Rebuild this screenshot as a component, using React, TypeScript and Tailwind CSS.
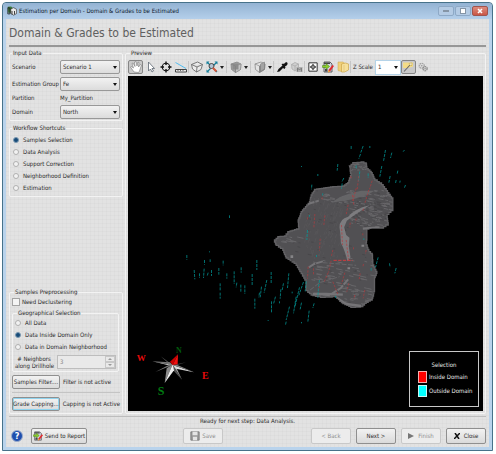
import React, { useState } from 'react';
import clsx from 'clsx';

type Point = [number, number];

const OUTLINE: Point[] = [
  [510, 78], [520, 68], [545, 66], [560, 72], [562, 86], [575, 98], [586, 120], [606, 134], [620, 152],
  [640, 180], [640, 212], [622, 228], [626, 255], [612, 264], [580, 264], [562, 268], [562, 300], [560, 315],
  [568, 335], [578, 345], [580, 375], [592, 400], [585, 420], [585, 455], [578, 480], [560, 490], [550, 500],
  [520, 502], [490, 488], [472, 470], [430, 472], [400, 465], [380, 448], [380, 420], [365, 395], [350, 370],
  [320, 350], [310, 325], [290, 312], [285, 300], [295, 290], [315, 288], [325, 275], [358, 265], [356, 240],
  [365, 215], [390, 185], [395, 165], [405, 148], [460, 140], [490, 138], [505, 128], [515, 100],
];

const random = (seed: number) => () => {
  seed = (seed * 16807) % 2147483647;
  return seed / 2147483647;
};

// The model is made of blocks, so its edge runs in steps
const blockEdge = (points: Point[], size: number) => {
  let d = '';
  points.forEach(([x, y], i) => {
    const [nx, ny] = points[(i + 1) % points.length];
    const steps = Math.max(1, Math.round(Math.hypot(nx - x, ny - y) / size));
    for (let s = 0; s < steps; s++) {
      const px = Math.round(x + ((nx - x) * s) / steps);
      const py = Math.round(y + ((ny - y) * s) / steps);
      d += d ? `H${px}V${py}` : `M${px} ${py}`;
    }
  });
  return d + 'Z';
};

// Short streaks scattered over a box: x, y, width, height, count, length
const streaks = (boxes: number[][], slope: number, seed: number) => {
  const rnd = random(seed);
  let d = '';
  boxes.forEach(([x, y, w, h, count, length]) => {
    for (let i = 0; i < count; i++) {
      const l = length * (0.4 + rnd());
      d += `M${(x + rnd() * w).toFixed(0)} ${(y + rnd() * h).toFixed(0)}l${l.toFixed(0)} ${(l * slope).toFixed(0)}`;
    }
  });
  return d;
};

const EDGE = blockEdge(OUTLINE, 7);
const LIGHT = streaks([[510, 150, 120, 110, 110, 12], [400, 360, 180, 60, 30, 16], [480, 430, 90, 70, 35, 14], [420, 155, 90, 35, 20, 12], [390, 350, 120, 110, 20, 12], [515, 70, 42, 25, 24, 6], [300, 290, 60, 20, 10, 16]], 0.2, 11);
const DARK = streaks([[300, 150, 330, 345, 90, 8], [520, 170, 100, 90, 50, 10]], 0.2, 29);
const GRAIN = streaks([[370, 180, 120, 180, 130, 4]], -3, 5);

// Drillholes outside the domain: x, y, length, lean
const OUTSIDE = [
  [515, 18, 12, 0], [551, 18, 22, -8], [543, 42, 14, -5], [571, 18, 6, 0], [618, 30, 34, -6], [637, 38, 16, -4], [675, 30, 5, -4],
  [475, 72, 20, -2], [607, 78, 32, -6], [655, 92, 10, -2], [632, 108, 20, -4], [650, 120, 10, -2], [678, 135, 8, -3], [662, 122, 6, -1],
  [493, 114, 12, -6], [488, 130, 16, -2], [397, 134, 14, -1], [415, 102, 6, 0], [366, 78, 3, 0], [150, 226, 8, 0], [541, 94, 30, -4],
  [566, 100, 14, 0], [530, 76, 10, 0], [384, 270, 30, -2], [411, 345, 6, 0], [430, 160, 6, -1], [553, 295, 5, 0], [390, 225, 5, 0],
  [22, 345, 14, 0], [44, 390, 28, 2], [60, 400, 14, 0], [75, 360, 14, 0], [74, 386, 28, -2], [92, 358, 8, 0], [96, 390, 18, 0], [86, 398, 10, -3],
  [118, 384, 20, 0], [122, 430, 22, 0], [122, 458, 18, 0], [131, 362, 14, 0], [142, 400, 16, 0], [164, 394, 38, 0], [172, 428, 14, -2],
  [185, 382, 16, 0], [184, 434, 24, 0], [196, 436, 26, 0], [218, 402, 34, 0], [232, 360, 30, 0], [226, 476, 30, 0], [246, 440, 32, -4],
  [262, 420, 38, -8], [275, 396, 36, 0], [276, 484, 34, 0], [288, 470, 22, -6], [304, 448, 28, -2], [312, 430, 20, -4], [328, 400, 44, -4],
  [330, 500, 40, -10], [350, 470, 50, -8], [360, 442, 60, -14], [372, 426, 40, -14], [366, 488, 20, -4], [404, 490, 14, -4], [389, 512, 34, -4],
  [320, 545, 10, -2], [420, 420, 22, -3], [417, 445, 28, -2], [596, 352, 30, -8], [630, 370, 12, 2], [650, 384, 16, -4], [575, 384, 8, 0], [90, 334, 3, 0],
  [338, 455, 5, 0], [300, 484, 6, 0], [266, 540, 3, 0], [366, 546, 4, 0], [380, 424, 30, -3], [240, 458, 14, -2], [468, 468, 6, 1],
];

const INSIDE = [
  [538, 108, 40, -5], [530, 145, 38, -10], [519, 165, 30, 4], [578, 122, 26, -8], [568, 150, 40, -12], [506, 194, 30, -6], [406, 222, 44, -3],
  [436, 226, 30, -3], [422, 296, 36, -2], [384, 232, 6, 0], [428, 172, 6, 0], [552, 206, 8, -2], [530, 235, 12, -2], [512, 248, 14, -1],
  [486, 255, 60, 3], [500, 300, 58, 7], [460, 330, 18, -4], [455, 362, 35, -8], [446, 398, 28, -12], [386, 380, 36, -2], [402, 385, 20, 0],
  [496, 398, 34, -10], [508, 430, 25, -6], [460, 425, 40, 16], [542, 400, 18, -3], [552, 372, 10, -2], [556, 450, 25, -5], [526, 465, 12, -3],
  [420, 438, 12, -2], [560, 330, 12, -2], [522, 322, 6, 0], [550, 280, 6, 0], [513, 108, 10, 4],
];

const holes = (list: number[][]) => list.map(([x, y, l, lean]) => `M${x} ${y}l${lean} ${l}`).join('');

const DomainView = () => (
  <svg className="block h-full w-full" viewBox="0 0 356 335" preserveAspectRatio="xMidYMid slice">
    <defs>
      <clipPath id="body"><path d={EDGE} /></clipPath>
    </defs>
    <g transform="translate(52 64) scale(.33333)" fill="none">
      <path d={EDGE} fill="#515053" stroke="#626164" strokeWidth="4" />
      <g clipPath="url(#body)">
        <path d={GRAIN} stroke="#59585b" strokeWidth="2" />
        <path d={DARK} stroke="#48474a" strokeWidth="3" />
        <path d="M455 188L480 172Q505 160 545 152L585 152L562 166L520 178Z" fill="#6e6d70" opacity=".7" />
        <path d={LIGHT} stroke="#676669" strokeWidth="3" />
        <path d="M570 196Q530 204 506 230Q480 236 480 262Q484 290 484 308Q496 330 504 364L513 352L508 320L510 293L500 285L494 262L502 242L526 224Z" fill="#7d7c7f" />
        <path d="M388 382L404 372L430 364M404 461L450 466L484 444L506 418M364 208L385 192L418 182" stroke="#757477" strokeWidth="6" strokeDasharray="22 3" />
        <path d="M472 474L500 492L545 498M400 462H440L490 464M550 266L600 262" stroke="#757477" strokeWidth="7" />
        <path d="M430 368L530 376M392 450L420 428L480 410" stroke="#676669" strokeWidth="3" strokeDasharray="14 5" />
        <path d="M546 314h8v6h-8zM504 382h8v6h-8zM333 346h8v8h-8z" fill="#858487" />
      </g>
      <path d={holes(OUTSIDE)} stroke="#009c9c" strokeWidth="2.6" strokeDasharray="9 3" opacity=".85" />
      <path d={holes(INSIDE)} stroke="#b4383c" strokeWidth="2.4" strokeDasharray="7 4" opacity=".85" />
      <path d="M462 361H520" stroke="#d03a3e" strokeWidth="3" strokeDasharray="10 4" />
    </g>
  </svg>
);

const Compass = () => (
  <svg className="absolute bottom-1.5 left-0 h-[60px] w-[90px]" viewBox="24 30 270 180" fontFamily="'Liberation Serif', serif" fontWeight="bold">
    <path d="M158 90L122 64L148 88Z" fill="#555" />
    <path d="M158 90L198 82L165 92Z" fill="#444" />
    <path d="M158 90L186 134L168 96Z" fill="#999" />
    <path d="M158 90L186 134L158 104Z" fill="#555" />
    <path d="M158 90L106 111L150 88Z" fill="#777" />
    <path d="M158 90L97 79L142 90Z" fill="#ccc" />
    <path d="M158 90L97 79L150 82Z" fill="#777" />
    <path d="M158 90L222 112L168 101Z" fill="#ddd" />
    <path d="M158 90L222 112L172 90Z" fill="#888" />
    <path d="M158 88L134 144L140 100Z" fill="#888" />
    <path d="M158 88L134 144L162 106Z" fill="#eee" />
    <path d="M158 90L150 80L174 58Z" fill="#c00" />
    <path d="M158 90L174 58L173 88Z" fill="#f01010" />
    <text x="50" y="79" fontSize="27" fill="#e60a0a">W</text>
    <text x="168" y="55" fontSize="24" fill="#005a0c">N</text>
    <text x="246" y="132" fontSize="30" fill="#e60a0a">E</text>
    <text x="113" y="179" fontSize="36" fill="#007c12">S</text>
  </svg>
);

const Icon: React.FC<{ children: React.ReactNode; className?: string }> = ({ children, className }) => (
  <svg viewBox="0 0 24 24" fill="none" className={clsx('shrink-0', className || 'size-3')}>{children}</svg>
);

const ReportIcon = ({ className }: { className?: string }) => (
  <Icon className={className}>
    <path d="M4 2h12l4 4v16H4z" fill="#d4d4de" stroke="#444" strokeWidth="1.6" />
    <path d="M4 3h12v3H4zM6 16h5v5H6z" fill="#444" />
    <path d="M1 9h7V5l7 6-7 6v-4H1z" fill="#8ed02a" stroke="#3e7a10" />
    <path d="M21 8l3 2-8 11-4 2 1-5z" fill="#e22b30" />
    <path d="M12 23l1-5 3 3z" fill="#f3c840" />
  </Icon>
);

const CubeIcon = ({ half }: { half?: boolean }) => (
  <Icon>
    <path d="M2 6L14 2l8 4-1 11-10 6-8-6z" fill={half ? '#e4e4e4' : '#a2a2a2'} stroke="#808080" strokeWidth="1.4" />
    <path d="M11 10L22 6l-1 11-10 6z" fill={half ? '#909090' : '#c4c4c4'} stroke="#808080" />
    {half ? <path d="M13 6l8-4v14l-8 5z" fill="#a4a4a4" stroke="#777" /> : <path d="M5 5h12v12H5z" fill="#8c8c8c" />}
    <path d="M2 6l9 4v13" stroke="#808080" strokeWidth="1.2" />
  </Icon>
);

const GreyCubes = ({ className }: { className?: string }) => (
  <Icon className={className}>
    <path d="M1 7l7-4 7 3v9l-7 5-6-4z" fill="#cfcfcf" stroke="#aaa" strokeWidth="1.5" />
    <path d="M1 7l7 3 7-4M8 10v9" stroke="#aaa" strokeWidth="1.5" />
    <path d="M11 12h12v10H11z" fill="#aeaeae" />
    <path d="M13 21v-7l4 4 4-4v7" stroke="#7d7d7d" strokeWidth="2" />
  </Icon>
);

const Gears = () => (
  <Icon className="size-2.5">
    <circle cx="9" cy="9" r="6" fill="#ddd" stroke="#a2a2a2" strokeWidth="3" strokeDasharray="4 1.5" />
    <circle cx="9" cy="9" r="2" fill="#999" />
    <circle cx="17" cy="16" r="5" fill="#d4d4d4" stroke="#8e8e8e" strokeWidth="3" strokeDasharray="3.5 1.5" />
    <circle cx="17" cy="16" r="1.6" fill="#888" />
  </Icon>
);

const Tool: React.FC<{ label: string; pressed?: boolean; children: React.ReactNode }> = ({ label, pressed, children }) => (
  <button
    aria-label={label}
    className={clsx('flex h-3.5 w-[15px] shrink-0 items-center justify-center rounded-xs', pressed && 'border border-[#868686] bg-[#c9c9c9]')}
  >
    {children}
  </button>
);

const Caret = ({ label }: { label: string }) => (
  <button aria-label={label} className="flex h-3.5 w-1.5 shrink-0 items-center justify-center">
    <svg viewBox="0 0 4 3" className="h-[3px] w-1"><path d="M0 0h4L2 3z" fill="#222" /></svg>
  </button>
);

const Divider = ({ wide }: { wide?: boolean }) => (
  <div className={clsx('h-3 w-px shrink-0 bg-[#c6c6c6]', wide && 'mx-px')} />
);

const Toolbar = () => (
  <div className="flex h-4 items-center">
    <Tool label="Pan" pressed>
      <Icon>
        <path d="M8 22L1 12l2-1 4 3L4 5l2-1 4 7L9 2l3-1 2 9 2-8 2 1-1 9 4-5 2 1-4 12-2 3z" fill="#fff" stroke="#777" strokeWidth="1.2" />
      </Icon>
    </Tool>
    <Tool label="Select">
      <Icon><path d="M7 2v18l4-4 3 6 3-2-3-5h5z" fill="#fff" stroke="#5c6570" strokeWidth="1.6" /></Icon>
    </Tool>
    <Tool label="Center">
      <Icon>
        <circle cx="12" cy="12" r="7.5" stroke="#111" strokeWidth="2.2" />
        <path d="M12 1v7M12 16v7M1 12h7M16 12h7" stroke="#111" strokeWidth="2.8" />
      </Icon>
    </Tool>
    <Tool label="Measure">
      <Icon>
        <path d="M1 3l21 12" stroke="#53bdf0" strokeWidth="2" />
        <path d="M1 17h22v5H1z" fill="#eee" stroke="#333" strokeWidth="1.8" />
        <path d="M6 17v3M11 17v3M16 17v3" stroke="#333" strokeWidth="1.4" />
      </Icon>
    </Tool>
    <Divider />
    <Tool label="Box view">
      <Icon>
        <path d="M1 7l12-5 10 5-3 10-9 5-8-6zM1 7l11 5 11-5M12 12l-1 10" fill="#ececec" stroke="#666" strokeWidth="1.7" />
      </Icon>
    </Tool>
    <Tool label="Zoom to extents">
      <Icon>
        <path d="M3 3l6 6M21 3l-6 6M3 21l6-6M22 22l-7-7" stroke="#137f9b" strokeWidth="2.4" />
        <path d="M1 1h6L1 7zM23 1h-6l6 6zM1 23h6l-6-6z" fill="#137f9b" />
        <circle cx="11" cy="10" r="5" fill="#b4c4d4" stroke="#444" strokeWidth="2" />
        <path d="M14 14l7 7" stroke="#d6583c" strokeWidth="4" />
      </Icon>
    </Tool>
    <Caret label="Zoom options" />
    <Divider wide />
    <Tool label="Solid view"><CubeIcon /></Tool>
    <Caret label="Solid view options" />
    <Divider wide />
    <Tool label="Slice view"><CubeIcon half /></Tool>
    <Caret label="Slice view options" />
    <Divider />
    <Tool label="Probe">
      <Icon>
        <path d="M2 22l3-6 8-7-2-2 3-2 2 1c3-5 8-4 7 0 0 2-3 4-5 5l1 2-2 3-3-2-7 7z" fill="#111" />
      </Icon>
    </Tool>
    <Tool label="Block model"><GreyCubes /></Tool>
    <Divider />
    <Tool label="Fit to view">
      <Icon className="size-2.5">
        <path d="M2 2h20v20H2z" fill="#fff" stroke="#333" strokeWidth="2.4" />
        <path d="M12 4l4 5h-8zM12 20l4-5h-8zM4 12l5-4v8zM20 12l-5-4v8z" fill="#333" />
        <path d="M12 8v8M8 12h8" stroke="#333" strokeWidth="1.6" />
      </Icon>
    </Tool>
    <Tool label="Send view to report"><ReportIcon /></Tool>
    <Tool label="Copy view">
      <Icon>
        <path d="M2 2h10l3 2v14l-6 3-7-2z" fill="#f0d07a" stroke="#c8a548" />
        <path d="M9 6l8-2 6 2v12l-8 4H9z" fill="#f6e09a" stroke="#cba64a" strokeWidth="1.4" />
        <path d="M14 8v14" stroke="#d4b560" />
      </Icon>
    </Tool>
    <Divider />
    <label htmlFor="z-scale" className="px-0.5">Z Scale</label>
    <div className="relative w-[26px] shrink-0">
      <select id="z-scale" className="block h-[15px] w-full appearance-none border border-[#b5d3e8] bg-white pl-0.5">
        <option>1</option>
      </select>
      <svg viewBox="0 0 4 3" className="pointer-events-none absolute top-1.5 right-[3px] h-[3px] w-1"><path d="M0 0h4L2 3z" fill="#111" /></svg>
    </div>
    <Tool label="Highlight" pressed>
      <Icon>
        <path d="M2 3h20v8l-9 3H2z" fill="#f3dc86" />
        <path d="M4 21L16 8" stroke="#666" strokeWidth="2.2" />
        <path d="M14 5l6-1-1 6z" fill="#fff" stroke="#b8962e" />
      </Icon>
    </Tool>
    <Tool label="Link views"><Gears /></Tool>
  </div>
);

const Group: React.FC<{ title: string; className?: string; children: React.ReactNode }> = ({ title, className, children }) => (
  <fieldset className={clsx('min-w-0 rounded-xs border border-[#f3f3f3]', className)}>
    <legend className="ml-0.5 px-px leading-2">{title}</legend>
    {children}
  </fieldset>
);

const Select: React.FC<{ id: string; label: string; value: string }> = ({ id, label, value }) => (
  <>
    <label htmlFor={id}>{label}</label>
    <div className="relative">
      <select id={id} className="block h-3.5 w-full appearance-none rounded-xs border border-[#989898] bg-linear-to-b from-[#f2f2f2] to-[#dcdcdc] pl-0.5">
        <option>{value}</option>
      </select>
      <svg viewBox="0 0 4 3" className="pointer-events-none absolute top-1.5 right-[3px] h-[3px] w-1"><path d="M0 0h4L2 3z" fill="#111" /></svg>
    </div>
  </>
);

const Radio: React.FC<{ name: string; label: string; checked: boolean; onChange: () => void }> = ({ name, label, checked, onChange }) => (
  <label className="flex h-3 items-center gap-1">
    <input
      type="radio"
      name={name}
      checked={checked}
      onChange={onChange}
      className="size-1.5 appearance-none rounded-full border border-[#b0b0b0] bg-[#f2f2f2] checked:border-[#7d9ab2] checked:bg-[#174b78]"
    />
    {label}
  </label>
);

const Button: React.FC<{ disabled?: boolean; className?: string; children: React.ReactNode }> = ({ disabled, className, children }) => (
  <button
    disabled={disabled}
    className={clsx(
      'flex items-center justify-center rounded-xs border whitespace-nowrap',
      disabled ? 'border-[#c8c8c8] bg-[#ececec] text-[#8c8c8c]' : 'border-[#8f8f8f] bg-linear-to-b from-[#f2f2f2] to-[#dadada]',
      className
    )}
  >
    {children}
  </button>
);

const SHORTCUTS = ['Samples Selection', 'Data Analysis', 'Support Correction', 'Neighborhood Definition', 'Estimation'];
const SELECTIONS = ['All Data', 'Data Inside Domain Only', 'Data in Domain Neighborhood'];

const App: React.FC = () => {
  const [shortcut, setShortcut] = useState(SHORTCUTS[0]);
  const [selection, setSelection] = useState(SELECTIONS[1]);

  return (
    <div className="flex min-h-screen flex-col bg-white pt-0.5 pr-[3px] pb-[3px] pl-0.5 font-['DejaVu_Sans_Condensed','DejaVu_Sans',sans-serif] text-[6px] leading-2 text-[#2a2a2a]">
      <div className="flex flex-1 flex-col rounded-t-sm border border-[#47728a] bg-[#b9d3ec] px-[3px] pb-[3px]">
        {/* Title bar */}
        <div className="-mx-[3px] flex h-4 items-center gap-0.5 rounded-t-sm bg-linear-to-b from-[#94b3d3] to-[#b4cfea] pr-1 pl-1">
          <Icon className="size-2.5">
            <path d="M2 2l8-1 3 3v12H3z" fill="#3b7b37" />
            <path d="M9 7l7-3 7 4v10l-7 4-7-4z" fill="#e9e9e9" stroke="#333" strokeWidth="1.6" />
            <path d="M2 4v15h5V5zM12 12v8M18 12v8" stroke="#222" strokeWidth="2" />
          </Icon>
          <span className="flex-1 text-[#10202e]">Estimation per Domain - Domain &amp; Grades to be Estimated</span>
          <div className="flex gap-px">
            <button aria-label="Minimize" className="flex h-2.5 w-4 items-center justify-center rounded-xs border border-[#8ea9c6] bg-[#b4cbe4]">
              <span className="h-0.5 w-1.5 border border-[#8595a6] bg-white" />
            </button>
            <button aria-label="Maximize" className="flex h-2.5 w-4 items-center justify-center rounded-xs border border-[#8ea9c6] bg-[#b4cbe4]">
              <span className="h-1.5 w-1.5 border border-[#8595a6] bg-white" />
            </button>
            <button aria-label="Close window" className="flex h-2.5 w-4 items-center justify-center rounded-xs border border-[#a0544e] bg-linear-to-b from-[#dc8b7e] to-[#c95646]">
              <svg viewBox="0 0 6 6" className="size-1.5"><path d="M1 1l4 4M5 1L1 5" stroke="#fff" strokeWidth="1.6" /></svg>
            </button>
          </div>
        </div>

        <div className="flex flex-1 flex-col bg-[#e2e2e2] bg-[linear-gradient(#00000005_1px,transparent_1px),linear-gradient(90deg,#00000005_1px,transparent_1px)] bg-size-[4px_4px] px-[3px] pb-[3px]">
          <h1 className="border-b-2 border-[#979797] pt-1.5 pb-1 text-[12px] leading-4 text-[#606060]">Domain &amp; Grades to be Estimated</h1>

          <div className="grid flex-1 grid-cols-[114px_minmax(0,1fr)] gap-0.5 pt-0.5">
            <div className="flex flex-col gap-[3px]">
              <Group title="Input Data" className="pb-px">
                <div className="grid grid-cols-[48px_minmax(0,1fr)] items-center gap-y-[3px] pt-[3px] pr-0.5 pl-0.5 whitespace-nowrap">
                  <Select id="scenario" label="Scenario" value="Scenario 1" />
                  <Select id="group" label="Estimation Group" value="Fe" />
                  <span>Partition</span>
                  <span>My_Partition</span>
                  <Select id="domain" label="Domain" value="North" />
                </div>
              </Group>

              <Group title="Workflow Shortcuts" className="pb-0.5">
                <div className="pt-0.5 pl-[3px]">
                  {SHORTCUTS.map((s) => (
                    <Radio key={s} name="shortcut" label={s} checked={s === shortcut} onChange={() => setShortcut(s)} />
                  ))}
                </div>
              </Group>

              <Group title="Samples Preprocessing" className="mt-auto px-0.5 pb-0.5">
                <label className="flex h-3 items-center gap-0.5">
                  <input type="checkbox" className="size-2 appearance-none border border-[#a4a4a4] bg-[#f4f4f4] checked:bg-[#174b78]" />
                  Need Declustering
                </label>
                <Group title="Geographical Selection" className="mt-px mr-px pb-0.5 pl-0.5">
                  {SELECTIONS.map((s) => (
                    <Radio key={s} name="selection" label={s} checked={s === selection} onChange={() => setSelection(s)} />
                  ))}
                  <div className="mt-0.5 flex items-center gap-1 pr-0.5">
                    <label htmlFor="neighbors" className="w-[38px] text-center leading-[7px] whitespace-nowrap"># Neighbors<br />along Drillhole</label>
                    <div className="flex h-3.5 min-w-0 flex-1 border border-[#bdbdbd] bg-[#e9e9e9]">
                      <input id="neighbors" type="number" disabled defaultValue={3} className="w-full min-w-0 flex-1 appearance-none pl-0.5 text-[#888] [&::-webkit-inner-spin-button]:appearance-none" />
                      <div className="flex w-2.5 flex-col">
                        <button disabled aria-label="More neighbors" className="flex flex-1 items-center justify-center border border-[#c8c8c8]">
                          <svg viewBox="0 0 4 2" className="h-0.5 w-1"><path d="M0 2h4L2 0z" fill="#999" /></svg>
                        </button>
                        <button disabled aria-label="Fewer neighbors" className="flex flex-1 items-center justify-center border border-[#c8c8c8]">
                          <svg viewBox="0 0 4 2" className="h-0.5 w-1"><path d="M0 0h4L2 2z" fill="#999" /></svg>
                        </button>
                      </div>
                    </div>
                  </div>
                </Group>
                <div className="mt-[3px] flex items-center gap-[3px] border-b border-[#c4c4c4] pb-[3px] whitespace-nowrap">
                  <Button className="h-3.5 w-12">Samples Filter....</Button>
                  <span>Filter is not active</span>
                </div>
                <div className="mt-1 flex items-center gap-[3px] whitespace-nowrap">
                  <Button className="h-3.5 w-12 border-[#3f9fc6] ring-1 ring-[#8fd3ee] ring-inset">Grade Capping...</Button>
                  <span>Capping is not Active</span>
                </div>
              </Group>
            </div>

            <Group title="Preview" className="flex flex-col px-0.5 pt-0.5 pb-0.5">
              <Toolbar />
              <div className="relative mt-px min-h-0 flex-1 bg-black">
                <div className="absolute inset-0"><DomainView /></div>
                <Compass />
                <div className="absolute right-1 bottom-1 flex h-14 w-[70px] flex-col justify-center border border-[#c8c8c8] pl-2 text-[#e8e8e8]">
                  <div className="mb-0.5 pr-2 text-center">Selection</div>
                  <div className="flex items-center gap-0.5 whitespace-nowrap">
                    <span className="h-3 w-[9px] border border-[#f3b0b0] bg-[#ff0000]" />
                    Inside Domain
                  </div>
                  <div className="mt-0.5 flex items-center gap-0.5 whitespace-nowrap">
                    <span className="h-3 w-[9px] border border-[#c8f4f4] bg-[#00ffff]" />
                    Outside Domain
                  </div>
                </div>
              </div>
            </Group>
          </div>

          {/* Wizard footer */}
          <div className="mt-0.5 border-t border-[#bdbdbd] text-center">Ready for next step: Data Analysis.</div>
          <div className="mt-[3px] grid grid-cols-[1fr_auto_1fr] items-center">
            <div className="flex items-center gap-2 pl-0.5">
              <button aria-label="Help" className="flex size-3 items-center justify-center rounded-full border border-[#9aaccc] bg-[#1f4fae] text-[9px] font-bold text-white">?</button>
              <Button className="h-4 w-14 gap-0.5"><ReportIcon className="size-2.5" />Send to Report</Button>
            </div>
            <Button disabled className="mr-22 h-4 w-10 gap-0.5">
              <Icon className="size-2.5">
                <path d="M2 2h20v20H2z" fill="#9a9a9a" stroke="#777" strokeWidth="2" />
                <path d="M6 2h12v8H6zM7 14h10v8H7z" fill="#e4e4e4" />
              </Icon>
              Save
            </Button>
            <div className="flex justify-end gap-[5px]">
              <Button disabled className="h-4 w-10">&lt; Back</Button>
              <Button className="h-4 w-10">Next &gt;</Button>
              <Button disabled className="h-4 w-10 gap-1">
                <svg viewBox="0 0 6 6" className="size-1.5"><path d="M0 0l6 3-6 3z" fill="#777" /></svg>
                Finish
              </Button>
              <Button className="h-4 w-10 gap-1">
                <svg viewBox="0 0 6 6" className="size-1.5"><path d="M1 0l4 6M6 0L0 6" stroke="#111" strokeWidth="1.5" /></svg>
                Close
              </Button>
            </div>
          </div>
        </div>
      </div>
    </div>
  );
};

export default App;
